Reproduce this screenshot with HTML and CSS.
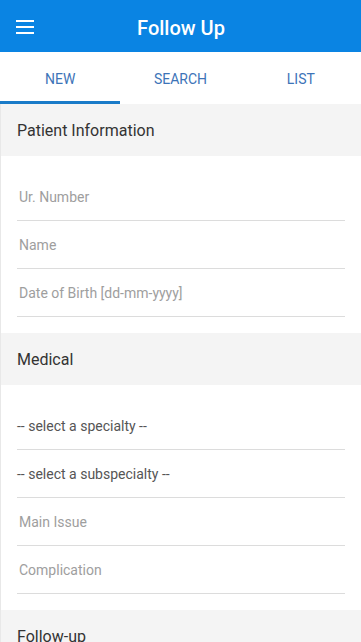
FILE: index.html
```html
<!DOCTYPE html>
<html lang="en">
<head>
  <meta charset="UTF-8" />
  <meta name="viewport" content="width=device-width, initial-scale=1.0" />
  <title>Follow Up</title>
  <link rel="stylesheet" href="styles.css">
</head>
<body>

  <div class="toolbar">
    <button class="menu-btn" aria-label="menu">
      <svg width="18" height="14" viewBox="0 0 18 14">
        <rect x="0" y="0" width="18" height="2" fill="#fff"/>
        <rect x="0" y="6" width="18" height="2" fill="#fff"/>
        <rect x="0" y="12" width="18" height="2" fill="#fff"/>
      </svg>
    </button>
    <h1>Follow Up</h1>
  </div>

  <div class="tabs">
    <div class="tab active">NEW</div>
    <div class="tab">SEARCH</div>
    <div class="tab">LIST</div>
  </div>

  <div class="content">
    <!-- Patient -->
    <div class="section-title">Patient Information</div>
    <div class="fields">
      <div class="field"><input type="text" placeholder="Ur. Number" /></div>
      <div class="field"><input type="text" placeholder="Name" /></div>
      <div class="field"><input type="text" placeholder="Date of Birth [dd-mm-yyyy]" /></div>
    </div>

    <!-- Medical -->
    <div class="section-title">Medical</div>
    <div class="fields">
      <div class="field"><div class="select">-- select a specialty --</div></div>
      <div class="field"><div class="select">-- select a subspecialty --</div></div>
      <div class="field"><input type="text" placeholder="Main Issue" /></div>
      <div class="field"><input type="text" placeholder="Complication" /></div>
    </div>

    <!-- Follow-up -->
    <div class="section-title">Follow-up</div>
    <div class="fields">
      <div class="field"><input type="text" placeholder="Date" /></div>
    </div>
  </div>

</body>
</html>
```

FILE: styles.css
```css
body {
  font-family: Roboto, "Liberation Sans", sans-serif;
  margin: 0;
  padding: 0;
  background: #fff;
  color: #333;
}
.toolbar {
  display: flex;
  align-items: center;
  height: 52px;
  background-color: #0a84e3;
  color: #fff;
}
.menu-btn {
  display: flex;
  align-items: center;
  justify-content: center;
  width: 52px;
  height: 52px;
  padding: 2px 0 0 0;
  border: none;
  background: none;
  margin-left: -1px;
}
.toolbar h1 {
  flex: 1;
  margin: 0 52px 0 0;
  text-align: center;
  font-size: 20px;
  font-weight: 500;
  padding: 3px 0 0 2px;
}
.tabs {
  display: flex;
  height: 52px;
  background: #fff;
}
.tab {
  flex: 1;
  display: flex;
  align-items: center;
  justify-content: center;
  font-size: 14px;
  color: #3d74b8;
  box-sizing: border-box;
  padding-top: 1px;
}
.tab.active {
  border-bottom: 3px solid #1a7bc8;
  padding-top: 4px;
}
.content {
  border-left: 1px solid #e8e8e8;
}
.section-title {
  background: #f4f4f4;
  height: 52px;
  display: flex;
  align-items: center;
  padding-left: 16px;
  font-size: 16px;
  color: #333;
}
.fields {
  padding: 17px 16px 16px 16px;
}
.field {
  height: 47px;
  border-bottom: 1px solid #dcdcdc;
  display: flex;
  align-items: center;
}
.field input {
  border: none;
  outline: none;
  width: 100%;
  font-family: inherit;
  font-size: 14px;
  padding: 0 0 0 2px;
  color: #333;
  background: transparent;
}
.field input::placeholder {
  color: #9e9e9e;
}
.select {
  font-size: 14px;
  color: #555;
}
```
